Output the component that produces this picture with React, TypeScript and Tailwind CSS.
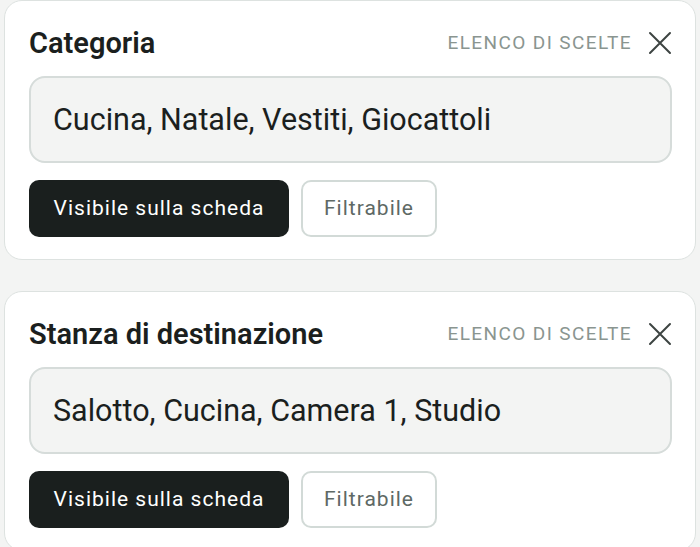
type Field = {
  title: string;
  values: string;
};

const fields: Field[] = [
  { title: "Categoria", values: "Cucina, Natale, Vestiti, Giocattoli" },
  { title: "Stanza di destinazione", values: "Salotto, Cucina, Camera 1, Studio" },
];

function CloseIcon() {
  return (
    <svg width="24" height="24" viewBox="0 0 24 24" fill="none" stroke="#3d4442" strokeWidth="2" strokeLinecap="round">
      <path d="M2 2L22 22M22 2L2 22" />
    </svg>
  );
}

function FieldCard({ field }: { field: Field }) {
  return (
    <div className="rounded-[18px] border border-[#dde2e0] bg-white pl-6 pr-[23px] pt-[24px] pb-[22px]">
      <div className="flex items-center justify-between">
        <h2 className="text-[29px] font-semibold leading-[36px] text-[#1b1f1e]">{field.title}</h2>
        <div className="flex items-center gap-[16px]">
          <span className="text-[19px] tracking-[1.4px] text-[#8a9590]">ELENCO DI SCELTE</span>
          <CloseIcon />
        </div>
      </div>
      <div className="mt-[15px] flex h-[87px] items-center rounded-[16px] border-2 border-[#d6dcda] bg-[#f3f4f3] px-[22px]">
        <span className="text-[30.5px] text-[#1b1f1e]">{field.values}</span>
      </div>
      <div className="mt-[17px] flex gap-3">
        <button className="flex h-[57px] w-[260px] items-center justify-center rounded-[10px] bg-[#1a1f1e] text-[21px] tracking-[1px] text-white">
          Visibile sulla scheda
        </button>
        <button className="flex h-[57px] w-[136px] items-center justify-center rounded-[10px] border-2 border-[#d2dad7] bg-white text-[21px] tracking-[1px] text-[#5e6965]">
          Filtrabile
        </button>
      </div>
    </div>
  );
}

export default function App() {
  return (
    <div
      className="min-h-screen bg-[#f3f4f3] px-1 flex flex-col gap-[31px]"
      style={{ fontFamily: "Roboto, 'Liberation Sans', sans-serif" }}
    >
      {fields.map((f) => (
        <FieldCard key={f.title} field={f} />
      ))}
    </div>
  );
}
